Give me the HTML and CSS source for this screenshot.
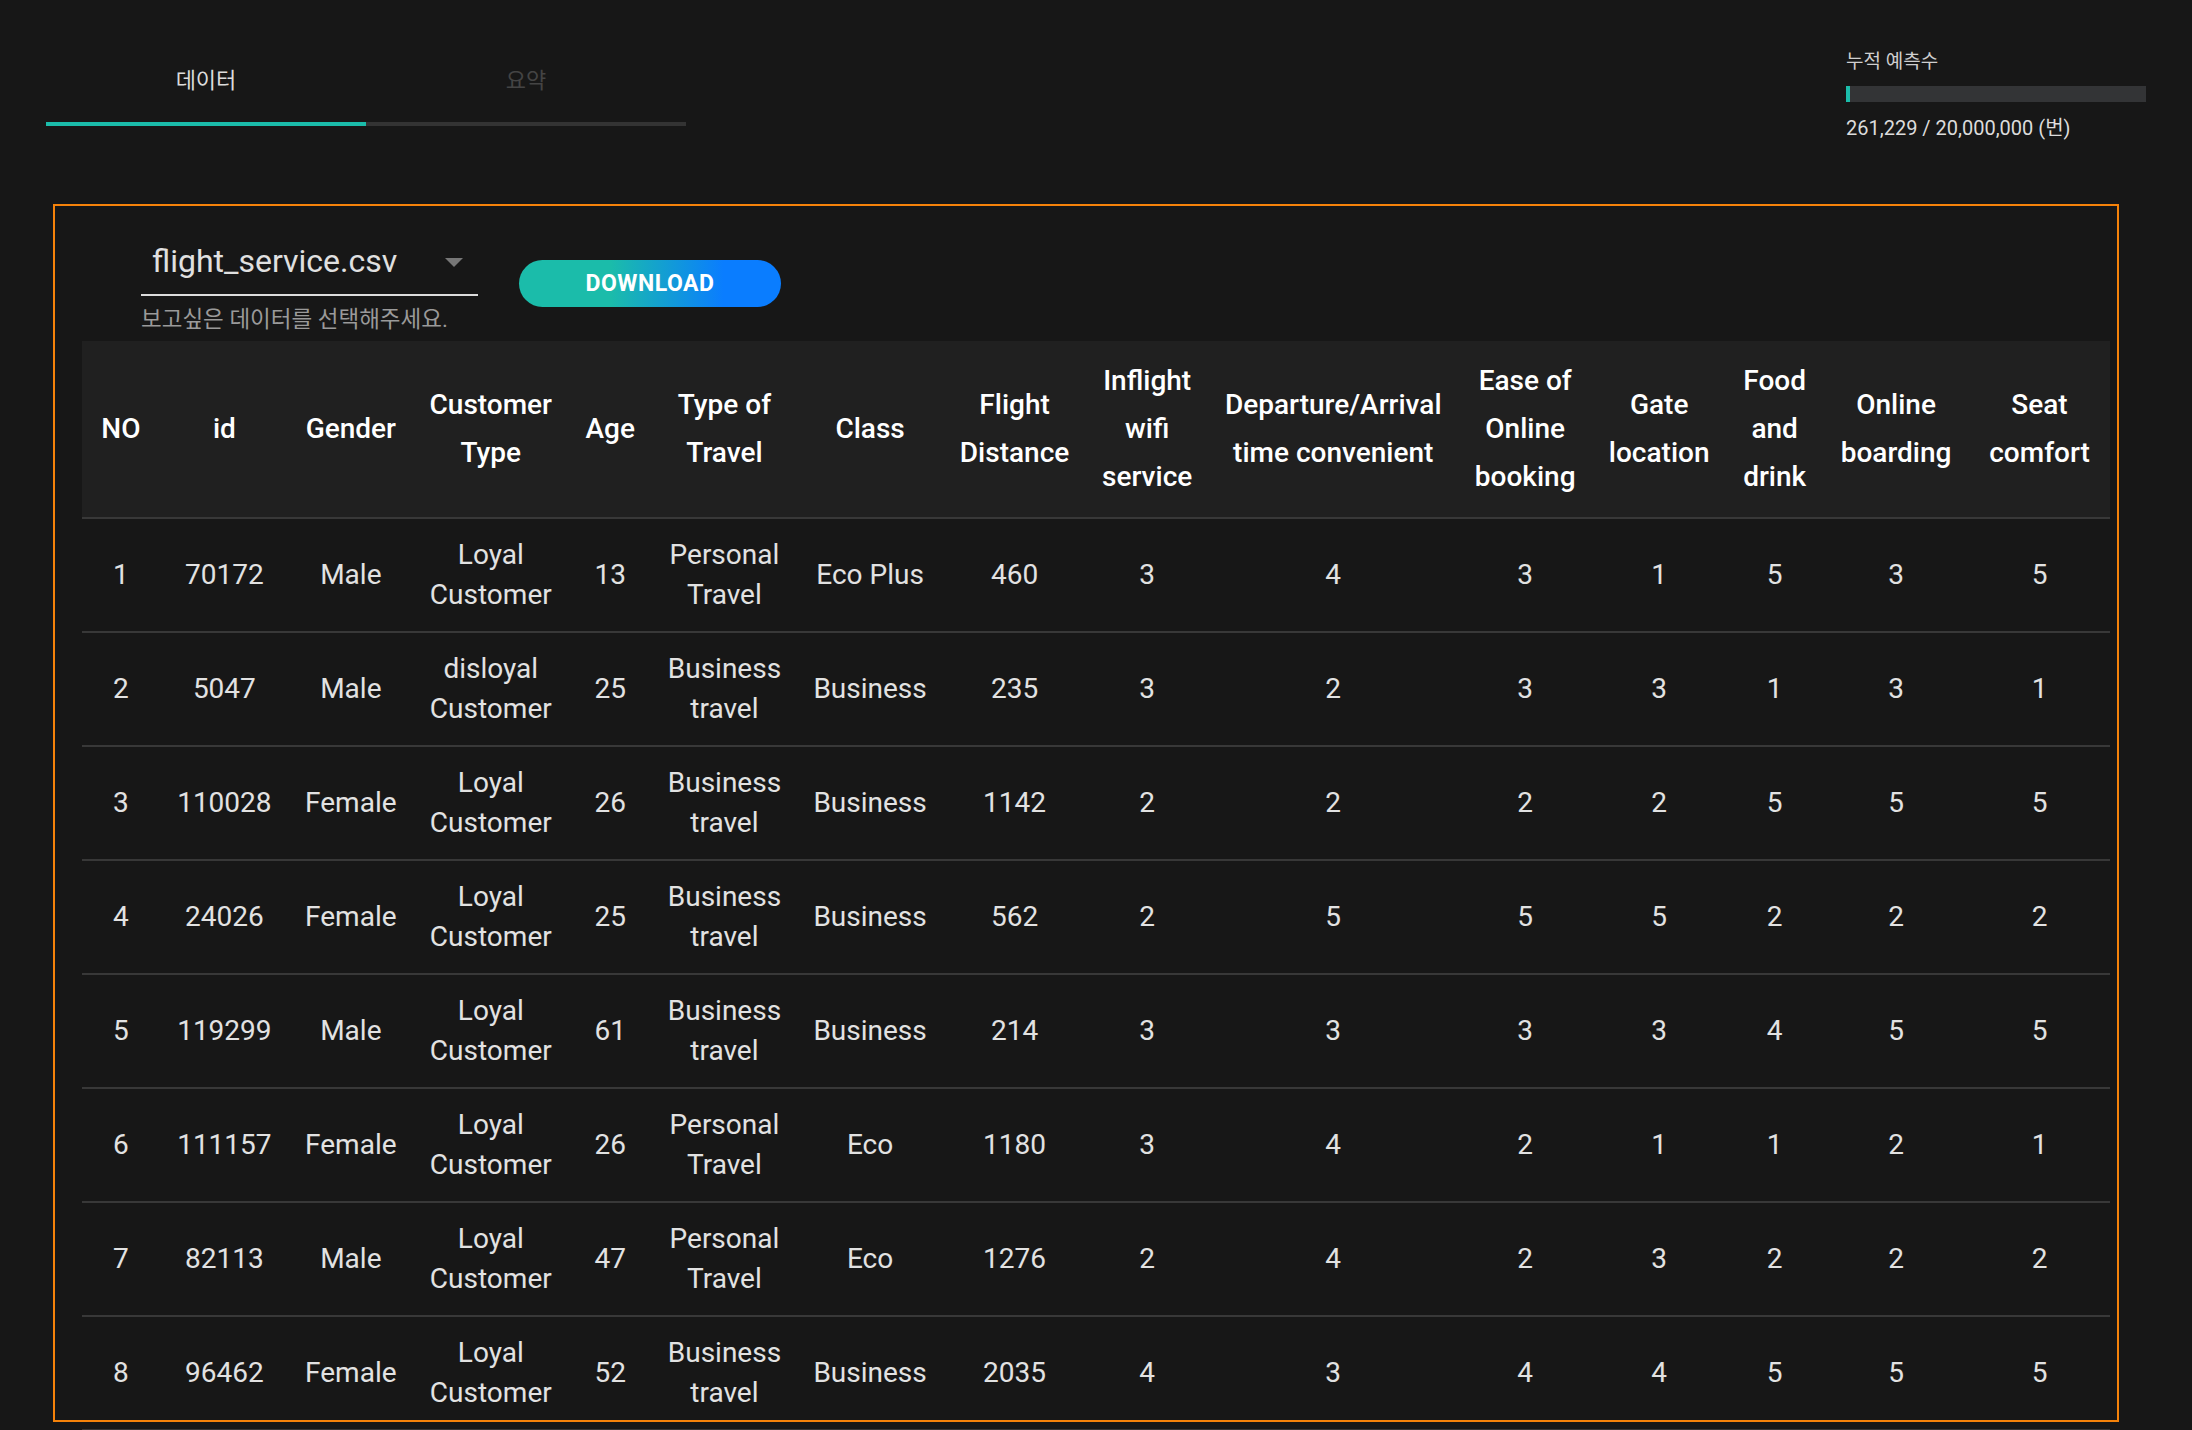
FILE: index.html
```html
<!DOCTYPE html>
<html lang="ko">
<head>
<meta charset="utf-8">
<title>flight service data</title>
<link rel="stylesheet" href="styles.css">
</head>
<body>
<div class="top">
  <div class="tabs">
    <div class="tab tab-active">데이터</div>
    <div class="tab">요약</div>
  </div>
  <div class="counter">
    <div class="counter-label">누적 예측수</div>
    <div class="counter-bar"><div class="counter-fill" style="width:1.3%"></div></div>
    <div class="counter-value">261,229 / 20,000,000 (번)</div>
  </div>
</div>

<div class="box">
  <div class="controls">
    <div class="field">
      <div class="select">
        <span class="select-value">flight_service.csv</span>
        <svg class="select-arrow" width="18" height="9" viewBox="0 0 18 9"><path d="M0 0H18L9 9Z" fill="#777"/></svg>
      </div>
      <div class="helper">보고싶은 데이터를 선택해주세요.</div>
    </div>
    <button class="download">DOWNLOAD</button>
  </div>

  <table class="data">
    <colgroup>
      <col class="c-no"><col class="c-id"><col class="c-gender"><col class="c-ctype"><col class="c-age"><col class="c-travel"><col class="c-class"><col class="c-dist"><col class="c-wifi"><col class="c-time"><col class="c-ease"><col class="c-gate"><col class="c-food"><col class="c-board"><col class="c-seat">
    </colgroup>
    <thead>
      <tr>
        <th>NO</th><th>id</th><th>Gender</th><th>Customer Type</th><th>Age</th><th>Type of Travel</th><th>Class</th><th>Flight Distance</th><th>Inflight wifi service</th><th>Departure/Arrival time convenient</th><th>Ease of Online booking</th><th>Gate location</th><th>Food and drink</th><th>Online boarding</th><th>Seat comfort</th>
      </tr>
    </thead>
    <tbody>
      <tr><td>1</td><td>70172</td><td>Male</td><td>Loyal Customer</td><td>13</td><td>Personal Travel</td><td>Eco Plus</td><td>460</td><td>3</td><td>4</td><td>3</td><td>1</td><td>5</td><td>3</td><td>5</td></tr>
      <tr><td>2</td><td>5047</td><td>Male</td><td>disloyal Customer</td><td>25</td><td>Business travel</td><td>Business</td><td>235</td><td>3</td><td>2</td><td>3</td><td>3</td><td>1</td><td>3</td><td>1</td></tr>
      <tr><td>3</td><td>110028</td><td>Female</td><td>Loyal Customer</td><td>26</td><td>Business travel</td><td>Business</td><td>1142</td><td>2</td><td>2</td><td>2</td><td>2</td><td>5</td><td>5</td><td>5</td></tr>
      <tr><td>4</td><td>24026</td><td>Female</td><td>Loyal Customer</td><td>25</td><td>Business travel</td><td>Business</td><td>562</td><td>2</td><td>5</td><td>5</td><td>5</td><td>2</td><td>2</td><td>2</td></tr>
      <tr><td>5</td><td>119299</td><td>Male</td><td>Loyal Customer</td><td>61</td><td>Business travel</td><td>Business</td><td>214</td><td>3</td><td>3</td><td>3</td><td>3</td><td>4</td><td>5</td><td>5</td></tr>
      <tr><td>6</td><td>111157</td><td>Female</td><td>Loyal Customer</td><td>26</td><td>Personal Travel</td><td>Eco</td><td>1180</td><td>3</td><td>4</td><td>2</td><td>1</td><td>1</td><td>2</td><td>1</td></tr>
      <tr><td>7</td><td>82113</td><td>Male</td><td>Loyal Customer</td><td>47</td><td>Personal Travel</td><td>Eco</td><td>1276</td><td>2</td><td>4</td><td>2</td><td>3</td><td>2</td><td>2</td><td>2</td></tr>
      <tr><td>8</td><td>96462</td><td>Female</td><td>Loyal Customer</td><td>52</td><td>Business travel</td><td>Business</td><td>2035</td><td>4</td><td>3</td><td>4</td><td>4</td><td>5</td><td>5</td><td>5</td></tr>
    </tbody>
  </table>
</div>
</body>
</html>
```

FILE: styles.css
```css
* { box-sizing: border-box; }

html, body {
  margin: 0;
  background: #171717;
  color: #e0e0e0;
  font-family: Roboto, "Noto Sans CJK KR", sans-serif;
}

body { overflow: hidden; height: 1430px; }

.top {
  display: flex;
  justify-content: space-between;
  align-items: flex-start;
  height: 126px;
  padding: 0 46px;
}

.tabs { display: flex; }

.tab {
  width: 320px;
  height: 126px;
  display: flex;
  align-items: flex-end;
  justify-content: center;
  padding-bottom: 27px;
  font-size: 22px;
  line-height: 28px;
  color: #444;
  border-bottom: 4px solid #333;
}

.tab-active {
  color: #dcdcdc;
  border-bottom-color: #1bbcaa;
}

.counter {
  width: 300px;
  padding-top: 49px;
}

.counter-label {
  font-size: 19px;
  line-height: 26px;
  color: #cfcfcf;
}

.counter-bar {
  margin-top: 11px;
  height: 16px;
  background: #333436;
}

.counter-fill {
  height: 100%;
  background: #1bbcaa;
}

.counter-value {
  margin-top: 13px;
  font-size: 20px;
  line-height: 26px;
  color: #dcdcdc;
}

.box {
  margin: 78px 0 0 53px;
  width: 2066px;
  height: 1218px;
  border: 2px solid #f5820a;
  padding: 0 7px 0 27px;
}

.controls {
  display: flex;
  align-items: flex-start;
  margin-left: 59px;
}

.field { width: 337px; }

.select {
  display: flex;
  justify-content: space-between;
  align-items: center;
  padding: 36px 15px 14px 11px;
  border-bottom: 2px solid #dcdcdc;
}

.select-value {
  font-size: 32px;
  line-height: 38px;
  color: #e0e0e0;
}

.select-arrow { display: block; margin-top: 2px; }

.helper {
  margin-top: 9px;
  font-size: 22.5px;
  line-height: 28px;
  color: #9a9a9a;
}

.download {
  margin: 54px 0 0 41px;
  width: 262px;
  height: 47px;
  border: 0;
  border-radius: 24px;
  background: linear-gradient(90deg, #1bbcaa 35%, #0a7dff 78%);
  color: #fff;
  font-family: Roboto, sans-serif;
  font-size: 23px;
  font-weight: 700;
  letter-spacing: 0.5px;
  padding: 0;
}

.data {
  margin-top: 8px;
  width: 2028px;
  border-collapse: collapse;
}

.c-no { width: 78px; }
.c-id { width: 129px; }
.c-gender { width: 124px; }
.c-ctype { width: 156px; }
.c-age { width: 83px; }
.c-travel { width: 145px; }
.c-class { width: 146px; }
.c-dist { width: 143px; }
.c-wifi { width: 122px; }
.c-time { width: 250px; }
.c-ease { width: 134px; }
.c-gate { width: 134px; }
.c-food { width: 97px; }
.c-board { width: 146px; }
.c-seat { width: 141px; }

.data th, .data td {
  padding: 16px;
  text-align: center;
  border-bottom: 2px solid #383838;
  font-size: 28px;
}

.data th {
  background: #202020;
  color: #fff;
  font-weight: 500;
  line-height: 48px;
}

.data td {
  color: #e2e2e2;
  font-weight: 400;
  line-height: 40px;
}
```
